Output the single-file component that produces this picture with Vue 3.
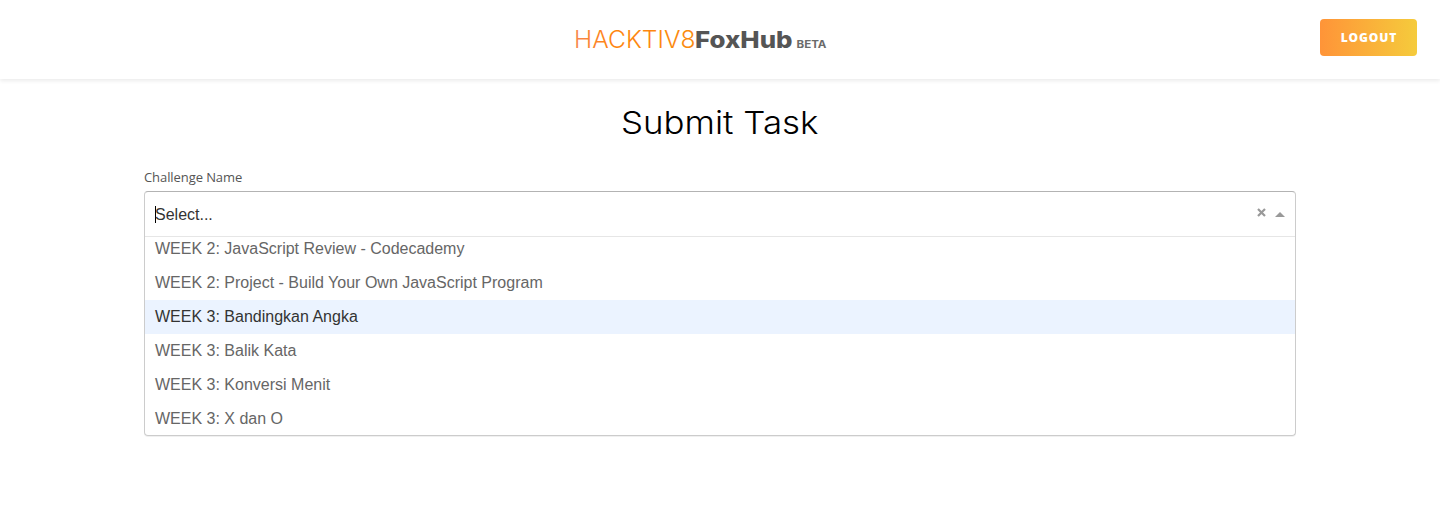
<script setup>
const options = [
  'WEEK 2: JavaScript Review - Codecademy',
  'WEEK 2: Project - Build Your Own JavaScript Program',
  'WEEK 3: Bandingkan Angka',
  'WEEK 3: Balik Kata',
  'WEEK 3: Konversi Menit',
  'WEEK 3: X dan O',
]
const focused = 2
</script>

<template>
  <div class="page">
    <header class="navbar">
      <svg class="brand" width="254" height="40" viewBox="574 20 254 40">
        <defs>
          <linearGradient id="brandInk" gradientUnits="userSpaceOnUse" x1="576" x2="694" y1="0" y2="0">
            <stop offset="0" stop-color="#f8854a" />
            <stop offset="0.3" stop-color="#ff8410" />
            <stop offset="1" stop-color="#fa8a10" />
          </linearGradient>
        </defs>
        <text class="thin" x="574" y="48" textLength="121.5" lengthAdjust="spacingAndGlyphs">HACKTIV8</text>
        <text class="heavy" x="695" y="48" textLength="97.5" lengthAdjust="spacingAndGlyphs">FoxHub</text>
        <text class="beta" x="796.5" y="48" textLength="30" lengthAdjust="spacingAndGlyphs">BETA</text>
      </svg>
      <button class="logout">LOGOUT</button>
    </header>
    <main class="content">
      <h1 class="title">
        <svg width="200" height="44" viewBox="620 100 200 44">
          <text x="621" y="134" textLength="197.5" lengthAdjust="spacingAndGlyphs">Submit Task</text>
        </svg>
      </h1>
      <label class="label">Challenge Name</label>
      <div class="select">
        <div class="control">
          <span class="caret"></span>
          <span class="placeholder">Select...</span>
          <svg class="clear" width="9" height="9" viewBox="0 0 9 9">
            <path d="M1 1 8 8M8 1 1 8" stroke="#999" stroke-width="2.2" />
          </svg>
          <span class="arrow"></span>
        </div>
        <div class="menu">
          <div v-for="(o, i) in options" :key="o" class="option" :class="{ focused: i === focused }">{{ o }}</div>
        </div>
      </div>
    </main>
  </div>
</template>

<style>
body {
  margin: 0;
  background: #fff;
}
</style>

<style scoped>
.page {
  height: 507px;
  overflow: hidden;
  background: #fff;
  font-family: "Open Sans", sans-serif;
}
.navbar {
  height: 79px;
  box-sizing: border-box;
  padding: 19px 23px 0 574px;
  display: flex;
  justify-content: space-between;
  align-items: flex-start;
  box-shadow: 0 2px 4px rgba(0, 0, 0, 0.08);
}
.brand {
  display: block;
  margin-top: 1px;
}
.brand text {
  font-family: Inter, sans-serif;
}
.thin {
  font-size: 23.5px;
  font-weight: 300;
  fill: url(#brandInk);
}
.heavy {
  font-size: 23.5px;
  font-weight: 800;
  fill: #555;
}
.beta {
  font-size: 11px;
  font-weight: 700;
  fill: #6b6b6b;
}
.logout {
  width: 97px;
  height: 37px;
  padding: 0 0 0 1px;
  border: 0;
  border-radius: 4px;
  background: linear-gradient(90deg, #ff9438, #f5cb3c);
  color: #fff;
  font: 800 12px/37px "Open Sans", sans-serif;
  letter-spacing: 0.9px;
}
.content {
  width: 1152px;
  margin: 0 auto;
  padding-top: 21px;
}
.title {
  margin: 0;
  height: 44px;
  display: flex;
  justify-content: center;
}
.title text {
  font-family: Inter, sans-serif;
  font-size: 31.5px;
  font-weight: 300;
  fill: #000;
}
.label {
  display: block;
  margin-top: 24px;
  height: 23px;
  font-size: 13px;
  line-height: 19px;
  letter-spacing: -0.08px;
  color: #555;
}
.select {
  box-sizing: border-box;
  height: 245px;
  border: 1px solid #ccc;
  border-top-color: #b3b3b3;
  border-radius: 4px;
  box-shadow: 0 1px 0 rgba(0, 0, 0, 0.06);
  font: 16px/34px "Liberation Sans", Arial, sans-serif;
  overflow: hidden;
}
.control {
  height: 44px;
  display: flex;
  align-items: center;
  padding: 0 10px;
  border-bottom: 1px solid #e6e6e6;
  color: #333;
}
.caret {
  width: 1px;
  height: 17px;
  margin-right: -1px;
  background: #000;
}
.placeholder {
  flex: 1;
  height: 34px;
  line-height: 36px;
}
.clear {
  margin: 0 9px 3px 0;
}
.arrow {
  border: 5px solid transparent;
  border-top: 0;
  border-bottom-color: #999;
}
.menu {
  height: 198px;
  overflow: hidden;
}
.option {
  height: 34px;
  padding: 0 10px;
  color: #666;
}
.option:first-child {
  margin-top: -5px;
}
.focused {
  background: #ebf3ff;
  color: #333;
}
</style>
